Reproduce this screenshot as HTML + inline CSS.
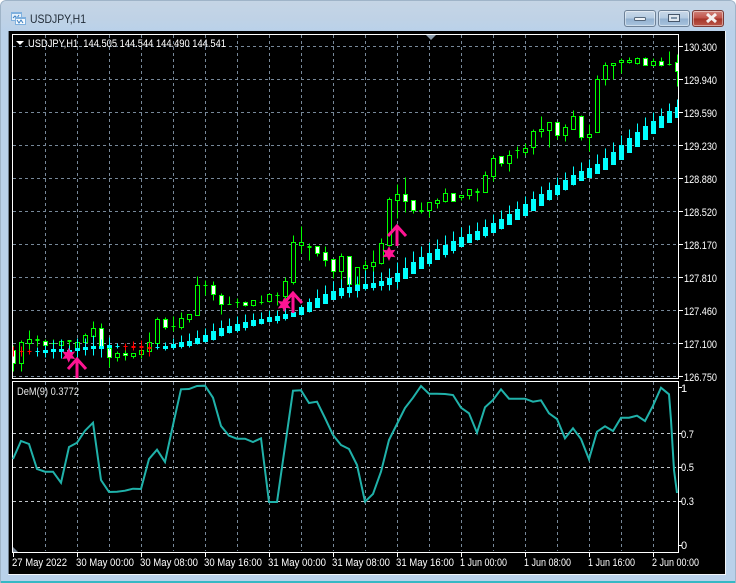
<!DOCTYPE html>
<html><head><meta charset="utf-8"><style>
html,body{margin:0;padding:0;width:736px;height:583px;overflow:hidden;background:#fff}
#w{position:absolute;left:0;top:0;width:736px;height:583px;box-sizing:border-box;border-radius:6px 6px 0 0;background:#b9d1ea;overflow:hidden;border:1px solid #9fb4c8;border-bottom:0}
#tg{position:absolute;left:0;top:0;right:0;height:31px;background:linear-gradient(#c5d5e5,#bfd2e6 60%,#b9d1ea)}
#bb{position:absolute;left:0;right:0;bottom:0;height:2px;background:#35b8c4}
.b{position:absolute;top:9px;height:17px;box-sizing:border-box;border:1px solid #6d8197;border-radius:3px;box-shadow:inset 0 0 0 1px rgba(255,255,255,.45)}
.n{background:linear-gradient(#c9d8e8,#b4cbe2 48%,#93b1d0 52%,#a9c4de)}
.c{background:linear-gradient(#d0837a,#c05248 48%,#a53428 52%,#bb5648);border-color:#7a3a36}
svg{position:absolute;left:0;top:0}
text{font-family:"Liberation Sans",sans-serif;font-size:11px;fill:#fff}
</style></head><body>
<div id="w"><div id="tg"></div><div id="bb"></div>
<div class="b n" style="left:623px;width:32px"></div>
<div class="b n" style="left:657px;width:32px"></div>
<div class="b c" style="left:691px;width:32px"></div>
</div>
<svg width="736" height="583" viewBox="0 0 736 583" xmlns="http://www.w3.org/2000/svg">
<defs>
<clipPath id="m"><rect x="13" y="35" width="665" height="344"/></clipPath>
<polygon id="st" points="0,-7.5 1.9,-3.2 6.5,-3.75 3.7,0 6.5,3.75 1.9,3.2 0,7.5 -1.9,3.2 -6.5,3.75 -3.7,0 -6.5,-3.75 -1.9,-3.2" fill="#ff1493"/>
<path id="ar" d="M-9 11L0 1L9 11M0 1V21" fill="none" stroke="#ff1493" stroke-width="3"/>
</defs>
<!-- title -->
<rect x="11" y="12" width="11" height="9" fill="#7fb0de"/><rect x="12" y="14" width="9" height="6" fill="#e8f2fb"/>
<path d="M13 18l2-2 2 2 2-3" stroke="#3d7fc0" fill="none"/>
<rect x="15" y="17" width="11" height="8" fill="#7fb0de"/><rect x="16" y="19" width="9" height="5" fill="#f4f9fd"/>
<path d="M17 20l2 3 2-3 2 3" stroke="#3d7fc0" fill="none"/>
<text x="30" y="23" textLength="56" lengthAdjust="spacingAndGlyphs" style="font-size:12px;fill:#1f2a36">USDJPY,H1</text>
<rect x="634.5" y="17.5" width="11" height="3" rx="1" fill="#eef2f6" stroke="#56687c"/>
<rect x="668.5" y="14.5" width="11" height="7" fill="#dfe7ef" stroke="#46566a"/><rect x="671" y="17" width="6" height="2" fill="#7e93a8"/>
<path d="M707 14l9 8M716 14l-9 8" stroke="#f4efee" stroke-width="3"/>
<!-- black area -->
<rect x="8" y="31" width="717" height="543" fill="#000"/>
<rect x="8" y="574" width="718" height="1" fill="#f2f6fa"/><rect x="725" y="31" width="1" height="544" fill="#f2f6fa"/>
<rect x="8" y="31" width="1" height="543" fill="#6f7f8f"/>
<!-- grid -->
<g fill="none" shape-rendering="crispEdges" stroke-dasharray="3 3">
<path stroke="#778899" d="M13 46.5H678M13 79.5H678M13 112.5H678M13 145.5H678M13 178.5H678M13 211.5H678M13 244.5H678M13 277.5H678M13 310.5H678M13 343.5H678M13 376.5H678"/>
<path stroke="#778899" d="M45.5 35V378M77.5 35V378M109.5 35V378M141.5 35V378M173.5 35V378M205.5 35V378M237.5 35V378M269.5 35V378M301.5 35V378M333.5 35V378M365.5 35V378M397.5 35V378M429.5 35V378M461.5 35V378M493.5 35V378M525.5 35V378M557.5 35V378M589.5 35V378M621.5 35V378M653.5 35V378"/>
<path stroke="#778899" d="M45.5 382V551M77.5 382V551M109.5 382V551M141.5 382V551M173.5 382V551M205.5 382V551M237.5 382V551M269.5 382V551M301.5 382V551M333.5 382V551M365.5 382V551M397.5 382V551M429.5 382V551M461.5 382V551M493.5 382V551M525.5 382V551M557.5 382V551M589.5 382V551M621.5 382V551M653.5 382V551"/>
<path stroke="#bfc4c9" d="M13 433.5H678M13 467.5H678M13 501.5H678"/>
</g>
<g clip-path="url(#m)"><g transform="translate(.5 .5)" shape-rendering="crispEdges" fill="none">
<!-- green wicks & solid dashes -->
<path stroke="#0f0" d="M13 345V371M21 340V371M29 330V349M37 335V346M45 339V346M53 339V348M61 339V348M69 340V345M77 338V352M85 333V344M93 321V337M101 323V357M109 346V367M117 351V361M125 346V360M133 353V358M141 345V358M149 332V355M157 317V344M165 317V329M173 316V331M181 312V329M189 314V322M197 276V315M205 280V295M213 281V300M221 293V314M229 296V304M237 298V307M245 301V306M253 300V306M261 295V304M269 293V302M277 292V305M285 277V300M293 235V284M301 226V253M309 243V260M317 246V256M325 246V266M333 259V278M341 253V280M349 256V284M357 267V284M365 260V290M373 250V290M381 238V264M389 197V246M397 184V218M405 177V212M413 200V213M421 202V213M429 202V217M437 198V208M445 188V202M453 193V201M461 195V200M469 189V199M477 188V201M485 171V192M493 155V181M501 156V166M509 150V171M517 146V158M525 143V155M533 129V154M541 116V137M549 122V147M557 122V139M565 124V141M573 110V129M581 115V140M589 124V151M597 75V132M605 62V85M613 63V79M621 58V73M629 57V63M637 57V64M645 57V65M653 58V66M661 57V66M669 51V65M677 54V86
M35 339h4M35 340h4M51 343h4M67 340h4M67 341h4M171 326h4M203 285h4M227 304h4M235 302h4M259 302h4M275 295h4M307 246h4M307 247h4M419 210h4M419 211h4M475 191h4M475 192h4M515 150h4M667 64h4"/>
<!-- hollow -->
<path stroke="#0f0" fill="#000" d="M19 342h4V363h-4zM27 339h4V343h-4zM59 341h4V345h-4zM75 342h4V349h-4zM83 335h4V342h-4zM91 328h4V336h-4zM115 353h4V357h-4zM131 353h4V356h-4zM139 350h4V354h-4zM147 342h4V351h-4zM155 319h4V343h-4zM179 318h4V327h-4zM187 314h4V319h-4zM195 285h4V315h-4zM251 300h4V305h-4zM267 294h4V301h-4zM283 281h4V296h-4zM291 242h4V282h-4zM299 242h4V245h-4zM339 256h4V271h-4zM355 267h4V284h-4zM363 265h4V268h-4zM371 262h4V266h-4zM379 243h4V263h-4zM387 199h4V245h-4zM395 194h4V200h-4zM427 202h4V210h-4zM435 200h4V203h-4zM443 193h4V201h-4zM459 195h4V197h-4zM467 189h4V195h-4zM483 175h4V192h-4zM491 158h4V176h-4zM507 155h4V163h-4zM523 148h4V152h-4zM531 131h4V147h-4zM539 129h4V131h-4zM547 122h4V130h-4zM563 127h4V135h-4zM571 116h4V129h-4zM587 134h4V137h-4zM595 79h4V132h-4zM603 65h4V79h-4zM611 63h4V65h-4zM619 60h4V62h-4zM627 60h4V62h-4zM635 58h4V63h-4zM651 61h4V65h-4z"/>
<!-- white -->
<path stroke="#0f0" fill="#fff" d="M11 350h4V363h-4zM43 341h4V345h-4zM99 328h4V348h-4zM107 348h4V357h-4zM123 353h4V355h-4zM163 319h4V327h-4zM211 285h4V294h-4zM219 295h4V304h-4zM243 302h4V305h-4zM315 246h4V253h-4zM323 252h4V260h-4zM331 259h4V271h-4zM347 256h4V284h-4zM403 194h4V201h-4zM411 200h4V210h-4zM451 193h4V201h-4zM499 156h4V163h-4zM555 122h4V135h-4zM579 116h4V137h-4zM643 58h4V65h-4zM659 61h4V65h-4zM675 62h4V71h-4z"/>
<!-- cyan wicks -->
<path stroke="#0ff" d="M37 347V356M45 345V357M53 340V358M61 339V358M69 345V360M77 338V358M85 338V355M93 335V355M101 339V357M109 337V350M117 343V348M157 343V349M165 342V350M173 338V349M181 335V348M189 333V347M197 330V344M205 328V342M213 323V340M221 320V336M229 318V333M237 316V332M245 314V330M253 313V326M261 312V324M269 310V322M277 310V323M285 308V320M293 307V316M301 305V315M309 298V312M317 289V307M325 285V303M333 281V299M341 279V298M349 277V297M357 276V297M365 270V290M373 271V290M381 272V290M389 268V290M397 262V288M405 257V278M413 251V273M421 246V268M429 242V266M437 239V259M445 235V257M453 231V253M461 227V246M469 225V242M477 222V240M485 219V237M493 214V232M501 210V229M509 205V224M517 201V219M525 196V215M533 191V210M541 186V205M549 182V200M557 177V196M565 172V190M573 166V185M581 162V180M589 159V177M597 154V173M605 148V169M613 142V164M621 135V159M629 129V152M637 123V146M645 117V139M653 112V133M661 108V127M669 103V122M677 99V117"/>
<!-- cyan bodies -->
<path stroke="#0ff" fill="#0ff" d="M35 351h4M43 350h4V352h-4zM51 349h4V351h-4zM59 349h4V351h-4zM67 350h4V352h-4zM75 348h4V350h-4zM83 347h4V349h-4zM91 346h4V348h-4zM99 346h4V348h-4zM107 345h4V347h-4zM115 346h4M155 347h4M163 346h4V348h-4zM171 344h4V347h-4zM179 342h4V346h-4zM187 341h4V345h-4zM195 338h4V343h-4zM203 335h4V341h-4zM211 331h4V339h-4zM219 328h4V335h-4zM227 326h4V332h-4zM235 324h4V330h-4zM243 322h4V327h-4zM251 320h4V325h-4zM259 319h4V323h-4zM267 317h4V321h-4zM275 316h4V320h-4zM283 314h4V318h-4zM291 312h4V316h-4zM299 307h4V314h-4zM307 302h4V311h-4zM315 298h4V307h-4zM323 294h4V303h-4zM331 291h4V299h-4zM339 288h4V295h-4zM347 287h4V292h-4zM355 285h4V290h-4zM363 284h4V288h-4zM371 283h4V287h-4zM379 281h4V285h-4zM387 278h4V284h-4zM395 273h4V281h-4zM403 268h4V278h-4zM411 262h4V273h-4zM419 257h4V268h-4zM427 253h4V263h-4zM435 249h4V259h-4zM443 245h4V254h-4zM451 241h4V250h-4zM459 237h4V246h-4zM467 234h4V242h-4zM475 231h4V239h-4zM483 227h4V235h-4zM491 223h4V232h-4zM499 219h4V228h-4zM507 214h4V224h-4zM515 209h4V219h-4zM523 204h4V215h-4zM531 199h4V210h-4zM539 194h4V205h-4zM547 190h4V199h-4zM555 185h4V194h-4zM563 180h4V189h-4zM571 175h4V184h-4zM579 171h4V180h-4zM587 168h4V177h-4zM595 164h4V173h-4zM603 158h4V169h-4zM611 152h4V164h-4zM619 145h4V159h-4zM627 138h4V152h-4zM635 132h4V146h-4zM643 126h4V139h-4zM651 121h4V133h-4zM659 116h4V127h-4zM667 111h4V122h-4zM675 107h4V117h-4z"/>
<!-- red -->
<path stroke="#f00" d="M13 346V356M19 351h4M21 346V356M27 351h4M29 349V354M125 343V350M123 346h4M133 341V350M131 346h4M131 347h4M141 340V355M139 346h4M139 347h4M149 342V356M147 347h4M147 348h4"/>
</g>
<use href="#st" x="68.7" y="355.3"/><use href="#st" x="284.3" y="304.7"/><use href="#st" x="389" y="253.5"/>
<use href="#ar" x="77" y="358"/><use href="#ar" x="293" y="292"/><use href="#ar" x="397" y="225"/>
</g>
<!-- frames -->
<g fill="none" stroke="#fff" shape-rendering="crispEdges">
<path d="M12.5 34.5H678.5V378.5H12.5Z"/>
<path d="M12.5 381.5H678.5V552.5H12.5Z"/>
<path d="M679 46.5h4M679 79.5h4M679 112.5h4M679 145.5h4M679 178.5h4M679 211.5h4M679 244.5h4M679 277.5h4M679 310.5h4M679 343.5h4M679 376.5h4M679 387.5h3M679 433.5h3M679 467.5h3M679 501.5h3M679 545.5h3"/>
<path d="M13.5 553v4M77.5 553v4M141.5 553v4M205.5 553v4M269.5 553v4M333.5 553v4M397.5 553v4M461.5 553v4M525.5 553v4M589.5 553v4M653.5 553v4"/>
</g>
<polygon points="426,35 436,35 431,40" fill="#8a9aaa"/>
<polygon points="13,547 18,552 13,552" fill="#7a8796"/>
<polygon points="16,41 24,41 20,45" fill="#fff"/>
<!-- DeM -->
<polyline fill="none" stroke="#20b2aa" stroke-width="2" points="13,459 21,441 29,444 37,469 45,471.7 53,471.7 61,482.7 69,447 77,442.7 85,430.7 93,422.7 101,480 109,492 117,491.7 125,490.7 133,488.7 141,489 149,459 157,449.7 165,462 173,425 181,389.3 189,389 197,386 205,385.7 213,397.7 221,426 229,435.7 237,438.7 245,438.7 253,442 261,438.3 269,502 277,502 293,390.7 301,390.3 309,403 317,401.7 325,418 333,435 341,445 349,449 357,465 365,501.7 373,494 381,471.7 389,440 397,424 405,408 413,397.7 421,386 429,393.7 437,393.7 445,394 453,395 461,407.7 469,413.3 477,432.7 485,407.3 493,400 501,389.3 509,398.7 517,398.7 525,398.7 533,401.7 541,400.3 549,413.3 557,419 565,438.3 573,428.3 581,439 589,459.3 597,431.7 605,426.3 613,431 621,417.7 629,417.7 637,415.7 645,421 653,405.7 661,387.7 669,394.3 671,420 674,470 677,493"/>
<!-- text -->
<text x="28" y="47" textLength="198" lengthAdjust="spacingAndGlyphs" xml:space="preserve">USDJPY,H1  144.505 144.544 144.490 144.541</text>
<text x="17" y="395" textLength="62" lengthAdjust="spacingAndGlyphs" style="fill:#e6e6e6">DeM(9) 0.3772</text>
<g lengthAdjust="spacingAndGlyphs">
<text x="684" y="51" textLength="33" lengthAdjust="spacingAndGlyphs">130.300</text><text x="684" y="84" textLength="33" lengthAdjust="spacingAndGlyphs">129.940</text><text x="684" y="117" textLength="33" lengthAdjust="spacingAndGlyphs">129.590</text><text x="684" y="150" textLength="33" lengthAdjust="spacingAndGlyphs">129.230</text><text x="684" y="183" textLength="33" lengthAdjust="spacingAndGlyphs">128.880</text><text x="684" y="216" textLength="33" lengthAdjust="spacingAndGlyphs">128.520</text><text x="684" y="249" textLength="33" lengthAdjust="spacingAndGlyphs">128.170</text><text x="684" y="282" textLength="33" lengthAdjust="spacingAndGlyphs">127.810</text><text x="684" y="315" textLength="33" lengthAdjust="spacingAndGlyphs">127.460</text><text x="684" y="348" textLength="33" lengthAdjust="spacingAndGlyphs">127.100</text><text x="684" y="381" textLength="33" lengthAdjust="spacingAndGlyphs">126.750</text>
<text x="681" y="392">1</text><text x="681" y="438" textLength="13" lengthAdjust="spacingAndGlyphs">0.7</text><text x="681" y="471" textLength="13" lengthAdjust="spacingAndGlyphs">0.5</text><text x="681" y="505" textLength="13" lengthAdjust="spacingAndGlyphs">0.3</text><text x="681" y="549">0</text>
<text x="12" y="566" textLength="55" lengthAdjust="spacingAndGlyphs">27 May 2022</text><text x="76" y="566" textLength="58" lengthAdjust="spacingAndGlyphs">30 May 00:00</text><text x="140" y="566" textLength="58" lengthAdjust="spacingAndGlyphs">30 May 08:00</text><text x="204" y="566" textLength="58" lengthAdjust="spacingAndGlyphs">30 May 16:00</text><text x="268" y="566" textLength="58" lengthAdjust="spacingAndGlyphs">31 May 00:00</text><text x="332" y="566" textLength="58" lengthAdjust="spacingAndGlyphs">31 May 08:00</text><text x="396" y="566" textLength="58" lengthAdjust="spacingAndGlyphs">31 May 16:00</text><text x="460" y="566" textLength="47" lengthAdjust="spacingAndGlyphs">1 Jun 00:00</text><text x="524" y="566" textLength="47" lengthAdjust="spacingAndGlyphs">1 Jun 08:00</text><text x="588" y="566" textLength="47" lengthAdjust="spacingAndGlyphs">1 Jun 16:00</text><text x="652" y="566" textLength="47" lengthAdjust="spacingAndGlyphs">2 Jun 00:00</text>
</g>
</svg>
</body></html>
